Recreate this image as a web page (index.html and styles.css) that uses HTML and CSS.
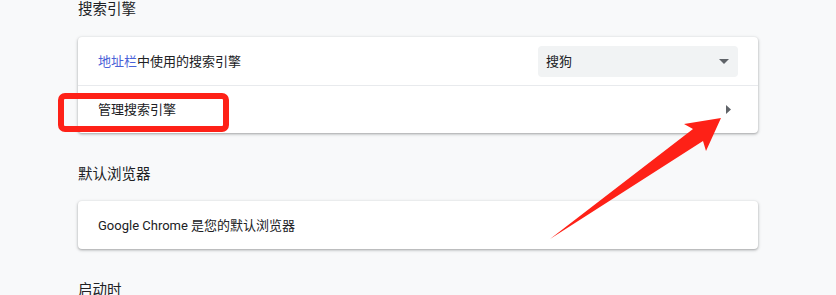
FILE: index.html
```html
<!DOCTYPE html>
<html lang="zh-CN">
<head>
<meta charset="utf-8">
<title>设置</title>
<link rel="stylesheet" href="styles.css">
</head>
<body>
<div class="page">
  <div class="content">
    <section class="section">
      <h2 class="section-title section-title--first">搜索引擎</h2>
      <div class="card">
        <div class="row">
          <span class="row-label"><span class="link">地址栏</span>中使用的搜索引擎</span>
          <div class="select">
            <span class="select-value">搜狗</span>
            <svg class="select-caret" width="10" height="5" viewBox="0 0 10 5"><polygon points="0,0 10,0 5,5" fill="#5f6368"/></svg>
          </div>
        </div>
        <div class="row row--divider">
          <span class="row-label">管理搜索引擎</span>
          <svg class="chevron" width="5" height="9" viewBox="0 0 5 9"><polygon points="0,0 5,4.5 0,9" fill="#5f6368"/></svg>
        </div>
      </div>
    </section>
    <section class="section">
      <h2 class="section-title">默认浏览器</h2>
      <div class="card">
        <div class="row">
          <span class="row-label">Google Chrome 是您的默认浏览器</span>
        </div>
      </div>
    </section>
    <section class="section">
      <h2 class="section-title">启动时</h2>
    </section>
  </div>
  <div class="annot-box"></div>
  <svg class="annot-arrow" width="836" height="295" viewBox="0 0 836 295">
    <polygon points="550,239 693,129 684,124 721,118 706,151 703,141" fill="#fe2117"/>
  </svg>
</div>
</body>
</html>
```

FILE: styles.css
```css
html, body {
  margin: 0;
  padding: 0;
}

body {
  background: #f8f9fa;
  color: #202124;
  font-family: Roboto, "Noto Sans CJK SC", "Noto Sans", sans-serif;
}

.page {
  position: relative;
  width: 836px;
  height: 295px;
  overflow: hidden;
}

.content {
  width: 680px;
  padding-left: 78px;
}

.section-title {
  margin: 32px 0 16px;
  font-size: 14.5px;
  font-weight: 400;
  line-height: 20px;
  color: #202124;
}

.section-title--first {
  margin: 0 0 17px;
}

.card {
  background: #fff;
  border-radius: 4px;
  box-shadow: 0 1px 2px 0 rgba(60, 64, 67, 0.3), 0 1px 3px 1px rgba(60, 64, 67, 0.15);
}

.row {
  display: flex;
  align-items: center;
  box-sizing: border-box;
  height: 48px;
  padding: 0 20px;
  font-size: 13px;
}

.row-label {
  margin-bottom: 2px;
}

.row--divider {
  border-top: 1px solid #e8eaed;
}

.link {
  color: #4a62d8;
}

.select {
  margin-left: auto;
  display: flex;
  align-items: center;
  justify-content: space-between;
  box-sizing: border-box;
  width: 200px;
  height: 31px;
  padding: 0 9px 0 8px;
  background: #f1f3f4;
  border-radius: 4px;
  font-size: 13px;
}

.select-value {
  margin-bottom: 2px;
}

.select-caret {
  display: block;
}

.chevron {
  display: block;
  margin-left: auto;
  margin-right: 7px;
}

.annot-box {
  position: absolute;
  left: 58px;
  top: 93px;
  width: 171px;
  height: 39px;
  box-sizing: border-box;
  border: 6px solid #fe2117;
  border-radius: 7px;
}

.annot-arrow {
  position: absolute;
  left: 0;
  top: 0;
  pointer-events: none;
}
```
